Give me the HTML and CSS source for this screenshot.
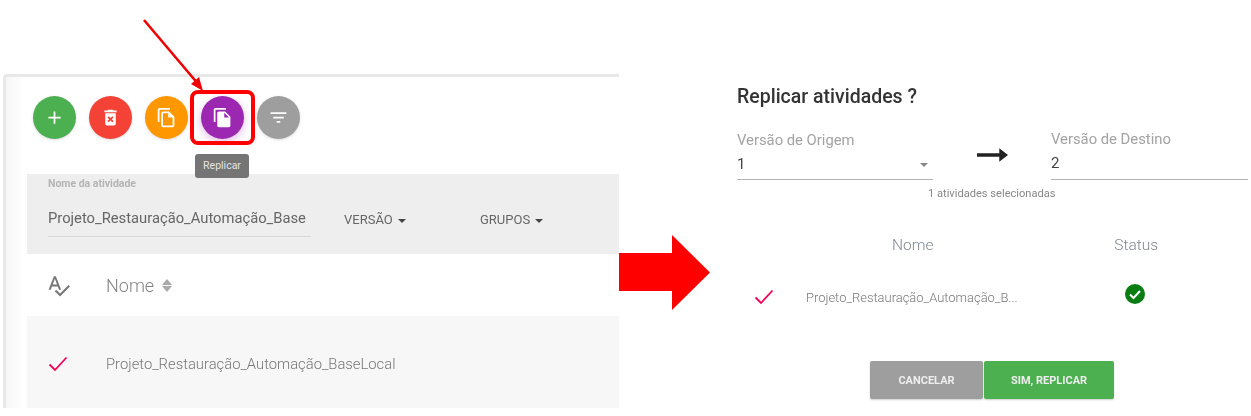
FILE: index.html
```html
<html>
    <head>
        <title>Replicar atividades</title>
        <link rel="stylesheet" href="styles.css">
    </head>
    <body>
    <div class="page">

        <!-- Lista de atividades -->
        <div class="list-panel">
            <div class="toolbar">
                <button type="button" class="fab green">
                    <svg viewBox="0 0 24 24" class="icon"><path d="M19 13h-6v6h-2v-6H5v-2h6V5h2v6h6v2z"/></svg>
                </button>
                <button type="button" class="fab red">
                    <svg viewBox="0 0 24 24" class="icon"><path d="M6 19c0 1.1.9 2 2 2h8c1.1 0 2-.9 2-2V7H6v12zm2.46-7.12l1.41-1.41L12 12.59l2.12-2.12 1.41 1.41L13.41 14l2.12 2.12-1.41 1.41L12 15.41l-2.12 2.12-1.41-1.41L10.59 14l-2.13-2.12zM15.5 4l-1-1h-5l-1 1H5v2h14V4z"/></svg>
                </button>
                <button type="button" class="fab orange">
                    <svg viewBox="0 0 24 24" class="icon"><path d="M16 1H4c-1.1 0-2 .9-2 2v14h2V3h12V1zm-1 4H8c-1.1 0-1.99.9-1.99 2L6 21c0 1.1.89 2 1.99 2H19c1.1 0 2-.9 2-2V11l-6-6zM8 21V7h6v5h5v9H8z"/></svg>
                </button>
                <button type="button" class="fab purple">
                    <svg viewBox="0 0 24 24" class="icon"><path d="M16 1H4c-1.1 0-2 .9-2 2v14h2V3h12V1zm-1 4l6 6v10c0 1.1-.9 2-2 2H7.99C6.89 23 6 22.1 6 21l.01-14c0-1.1.89-2 1.99-2h7zm-1 7h5.5L14 6.5V12z"/></svg>
                </button>
                <button type="button" class="fab grey">
                    <svg viewBox="0 0 24 24" class="icon"><path d="M10 18h4v-2h-4v2zM3 6v2h18V6H3zm3 7h12v-2H6v2z"/></svg>
                </button>
                <div class="highlight"></div>
                <div class="tooltip">Replicar</div>
            </div>

            <div class="filters">
                <div class="search">
                    <label class="search-label">Nome da atividade</label>
                    <div class="search-value">Projeto_Restauração_Automação_Base</div>
                </div>
                <div class="drop drop-version">VERSÃO <span class="caret"></span></div>
                <div class="drop">GRUPOS <span class="caret"></span></div>
            </div>

            <div class="list-head">
                <svg viewBox="0 0 24 24" class="spell"><path d="M12.45 16h2.09L9.43 3H7.57L2.46 16h2.09l1.12-3h5.64l1.14 3zm-6.02-5L8.5 5.48 10.57 11H6.43zm15.16.59l-8.09 8.09L9.83 16l-1.41 1.41 5.09 5.09L23 13l-1.41-1.41z"/></svg>
                <span class="list-title">Nome</span>
                <span class="sort"><i class="up"></i><i class="down"></i></span>
            </div>

            <div class="list-row">
                <svg viewBox="0 0 20 16" class="check"><polyline points="1.5,8.5 7,14 18.5,1.5"/></svg>
                <span class="row-name">Projeto_Restauração_Automação_BaseLocal</span>
            </div>
        </div>

        <!-- Seta entre as telas -->
        <svg viewBox="0 0 91 75" class="big-arrow"><polygon points="0,18 53,18 53,0 91,37.5 53,75 53,56 0,56"/></svg>

        <!-- Dialogo -->
        <div class="dialog">
            <h2 class="dialog-title">Replicar atividades ?</h2>
            <div class="versions">
                <div class="field field-origin">
                    <div class="field-label">Versão de Origem</div>
                    <div class="field-value">1<span class="field-caret"></span></div>
                </div>
                <svg viewBox="0 0 32 14" class="small-arrow"><path d="M0 5.2h23V0l9 7-9 7V8.8H0z"/></svg>
                <div class="field field-dest">
                    <div class="field-label">Versão de Destino</div>
                    <div class="field-value">2</div>
                </div>
            </div>
            <div class="counter">1 atividades selecionadas</div>

            <div class="table-head">
                <span class="th-name">Nome</span>
                <span class="th-status">Status</span>
            </div>
            <div class="table-row">
                <svg viewBox="0 0 20 16" class="check check-dialog"><polyline points="1.5,8.5 7,14 18.5,1.5"/></svg>
                <span class="td-name">Projeto_Restauração_Automação_B...</span>
                <svg viewBox="0 0 20 20" class="status-ok"><circle cx="10" cy="10" r="10"/><polyline points="5,10.5 8.5,14 15,7"/></svg>
            </div>

            <div class="actions">
                <button type="button" class="btn btn-cancel">CANCELAR</button>
                <button type="button" class="btn btn-ok">SIM, REPLICAR</button>
            </div>
        </div>

        <!-- Seta vermelha fina -->
        <svg viewBox="0 0 70 80" class="pointer">
            <line x1="1" y1="1" x2="56" y2="66"/>
            <polygon points="60,72 48,65 56,58"/>
        </svg>
    </div>
    </body>
</html>
```

FILE: styles.css
```css
body {
    margin: 0;
    background-color: white;
    font-family: Roboto, "Liberation Sans", sans-serif;
}

.page {
    position: relative;
    display: flex;
    align-items: flex-start;
    width: 1251px;
    height: 416px;
    overflow: hidden;
    filter: blur(0.35px);
}

/* painel da esquerda */
.list-panel {
    width: 613px;
    height: 331px;
    margin: 74px 0 0 3px;
    border-top: 3px solid #e8e8e8;
    border-left: 3px solid #e8e8e8;
    border-top-left-radius: 4px;
    background: linear-gradient(90deg, #f6f6f6, white 18px);
}

.toolbar {
    position: relative;
    display: flex;
    gap: 13px;
    height: 78px;
    padding: 19px 0 0 27px;
}

.fab {
    display: flex;
    align-items: center;
    justify-content: center;
    width: 43px;
    height: 43px;
    padding: 0;
    border: none;
    border-radius: 50%;
    box-shadow: 0 1px 3px rgba(0, 0, 0, 0.15);
}

.icon {
    width: 21px;
    height: 21px;
    fill: white;
}

.green { background-color: #4caf50; }
.red { background-color: #f44336; }
.orange { background-color: #ff9800; }
.purple { background-color: #9c27b0; box-shadow: 0 3px 8px rgba(156, 39, 176, 0.3); }
.grey { background-color: #9e9e9e; }

.highlight {
    position: absolute;
    left: 184px;
    top: 13px;
    width: 57px;
    height: 47px;
    border: 4px solid #ff0000;
    border-radius: 8px;
}

.tooltip {
    position: absolute;
    left: 189px;
    top: 77px;
    z-index: 2;
    width: 54px;
    height: 24px;
    border-radius: 3px;
    background-color: #757575;
    color: #e4e4e4;
    font-size: 10.5px;
    line-height: 24px;
    text-align: center;
}

.filters {
    display: flex;
    height: 80px;
    margin-left: 21px;
    background-color: #eeeeee;
}

.search {
    width: 263px;
    height: 62px;
    margin-left: 21px;
    border-bottom: 1px solid #d8d8d8;
}

.search-label {
    display: block;
    margin-top: 3px;
    color: #b4b4b4;
    font-size: 10.5px;
    font-weight: 700;
    line-height: 13px;
}

.search-value {
    margin-top: 18px;
    color: #666;
    font-size: 14.75px;
    line-height: 20px;
    white-space: nowrap;
}

.drop {
    margin: 38px 0 0 33px;
    color: #666;
    font-size: 13px;
    line-height: 16px;
}

.drop-version {
    width: 103px;
}

.caret {
    display: inline-block;
    margin-left: 2px;
    vertical-align: middle;
    border-top: 4px solid #444;
    border-left: 4px solid transparent;
    border-right: 4px solid transparent;
}

.list-head {
    display: flex;
    align-items: center;
    height: 62px;
    margin-left: 21px;
}

.spell {
    width: 25px;
    height: 25px;
    margin-left: 19px;
    fill: #777;
}

.list-title {
    margin-left: 35px;
    color: #858585;
    font-size: 18px;
    font-weight: 300;
}

.sort {
    display: inline-block;
    margin-left: 8px;
}

.sort i {
    display: block;
    width: 0;
    border-left: 5px solid transparent;
    border-right: 5px solid transparent;
}

.sort .up {
    margin-bottom: 1px;
    border-bottom: 6px solid #aaa;
}

.sort .down {
    border-top: 6px solid #aaa;
}

.list-row {
    display: flex;
    align-items: center;
    box-sizing: border-box;
    height: 92px;
    padding-top: 3px;
    margin-left: 21px;
    background-color: #f7f7f7;
}

.check {
    width: 20px;
    height: 16px;
    margin-left: 21px;
    fill: none;
    stroke: #f50057;
    stroke-width: 1.8;
}

.row-name {
    margin-left: 38px;
    color: #777;
    font-size: 14.8px;
    font-weight: 300;
}

.big-arrow {
    flex: none;
    width: 91px;
    height: 75px;
    margin-top: 235px;
    fill: #ff0000;
}

/* dialogo */
.dialog {
    flex: none;
    width: 514px;
    margin: 86px 0 0 27px;
}

.dialog-title {
    margin: 0;
    color: #333;
    font-size: 19.5px;
    font-weight: 500;
    line-height: 22px;
}

.versions {
    display: flex;
    margin-top: 9px;
}

.field {
    flex: none;
    border-bottom: 1px solid #b5b5b5;
}

.field-origin {
    position: relative;
    width: 196px;
    height: 63px;
    padding-top: 14px;
    box-sizing: border-box;
}

.field-dest {
    width: 197px;
    height: 64px;
    margin: -1px 0 0 43px;
    padding-top: 14px;
    box-sizing: border-box;
}

.field-label {
    color: #a3a3a3;
    font-size: 14.8px;
    line-height: 18px;
}

.field-value {
    margin-top: 6px;
    color: #444;
    font-size: 15px;
    line-height: 18px;
}

.field-caret {
    position: absolute;
    right: 5px;
    top: 46px;
    border-top: 4px solid #888;
    border-left: 4px solid transparent;
    border-right: 4px solid transparent;
}

.small-arrow {
    flex: none;
    width: 31px;
    height: 14px;
    margin: 31px 0 0 44px;
    fill: #222;
}

.counter {
    margin-top: 7px;
    padding-left: 191px;
    color: #888;
    font-size: 11.1px;
    line-height: 14px;
}

.table-head {
    position: relative;
    height: 20px;
    margin-top: 34px;
    color: #7f8890;
    font-size: 15.5px;
    font-weight: 300;
    line-height: 20px;
}

.th-name {
    margin-left: 155px;
}

.th-status {
    margin-left: 177px;
}

.table-row {
    display: flex;
    align-items: center;
    height: 30px;
    margin-top: 27px;
}

.check-dialog {
    margin-left: 17px;
}

.td-name {
    width: 294px;
    margin-left: 32px;
    color: #777;
    font-size: 12.95px;
    font-weight: 300;
}

.status-ok {
    width: 20px;
    height: 20px;
    margin: -6px 0 0 25px;
    fill: #0a7d12;
}

.status-ok polyline {
    fill: none;
    stroke: white;
    stroke-width: 2;
}

.actions {
    display: flex;
    gap: 1px;
    margin: 49px 0 0 133px;
}

.btn {
    height: 38px;
    padding: 0;
    border: none;
    border-radius: 2px;
    color: #eeeeee;
    font-family: inherit;
    font-size: 11px;
    font-weight: 700;
    box-shadow: 0 1px 2px rgba(0, 0, 0, 0.2);
}

.btn-cancel {
    width: 113px;
    background-color: #9e9e9e;
}

.btn-ok {
    width: 130px;
    background-color: #4caf50;
}

/* seta sobre a captura */
.pointer {
    position: absolute;
    left: 143px;
    top: 19px;
    width: 70px;
    height: 80px;
    fill: #f00000;
}

.pointer line {
    stroke: #f00000;
    stroke-width: 2.6;
}
```
